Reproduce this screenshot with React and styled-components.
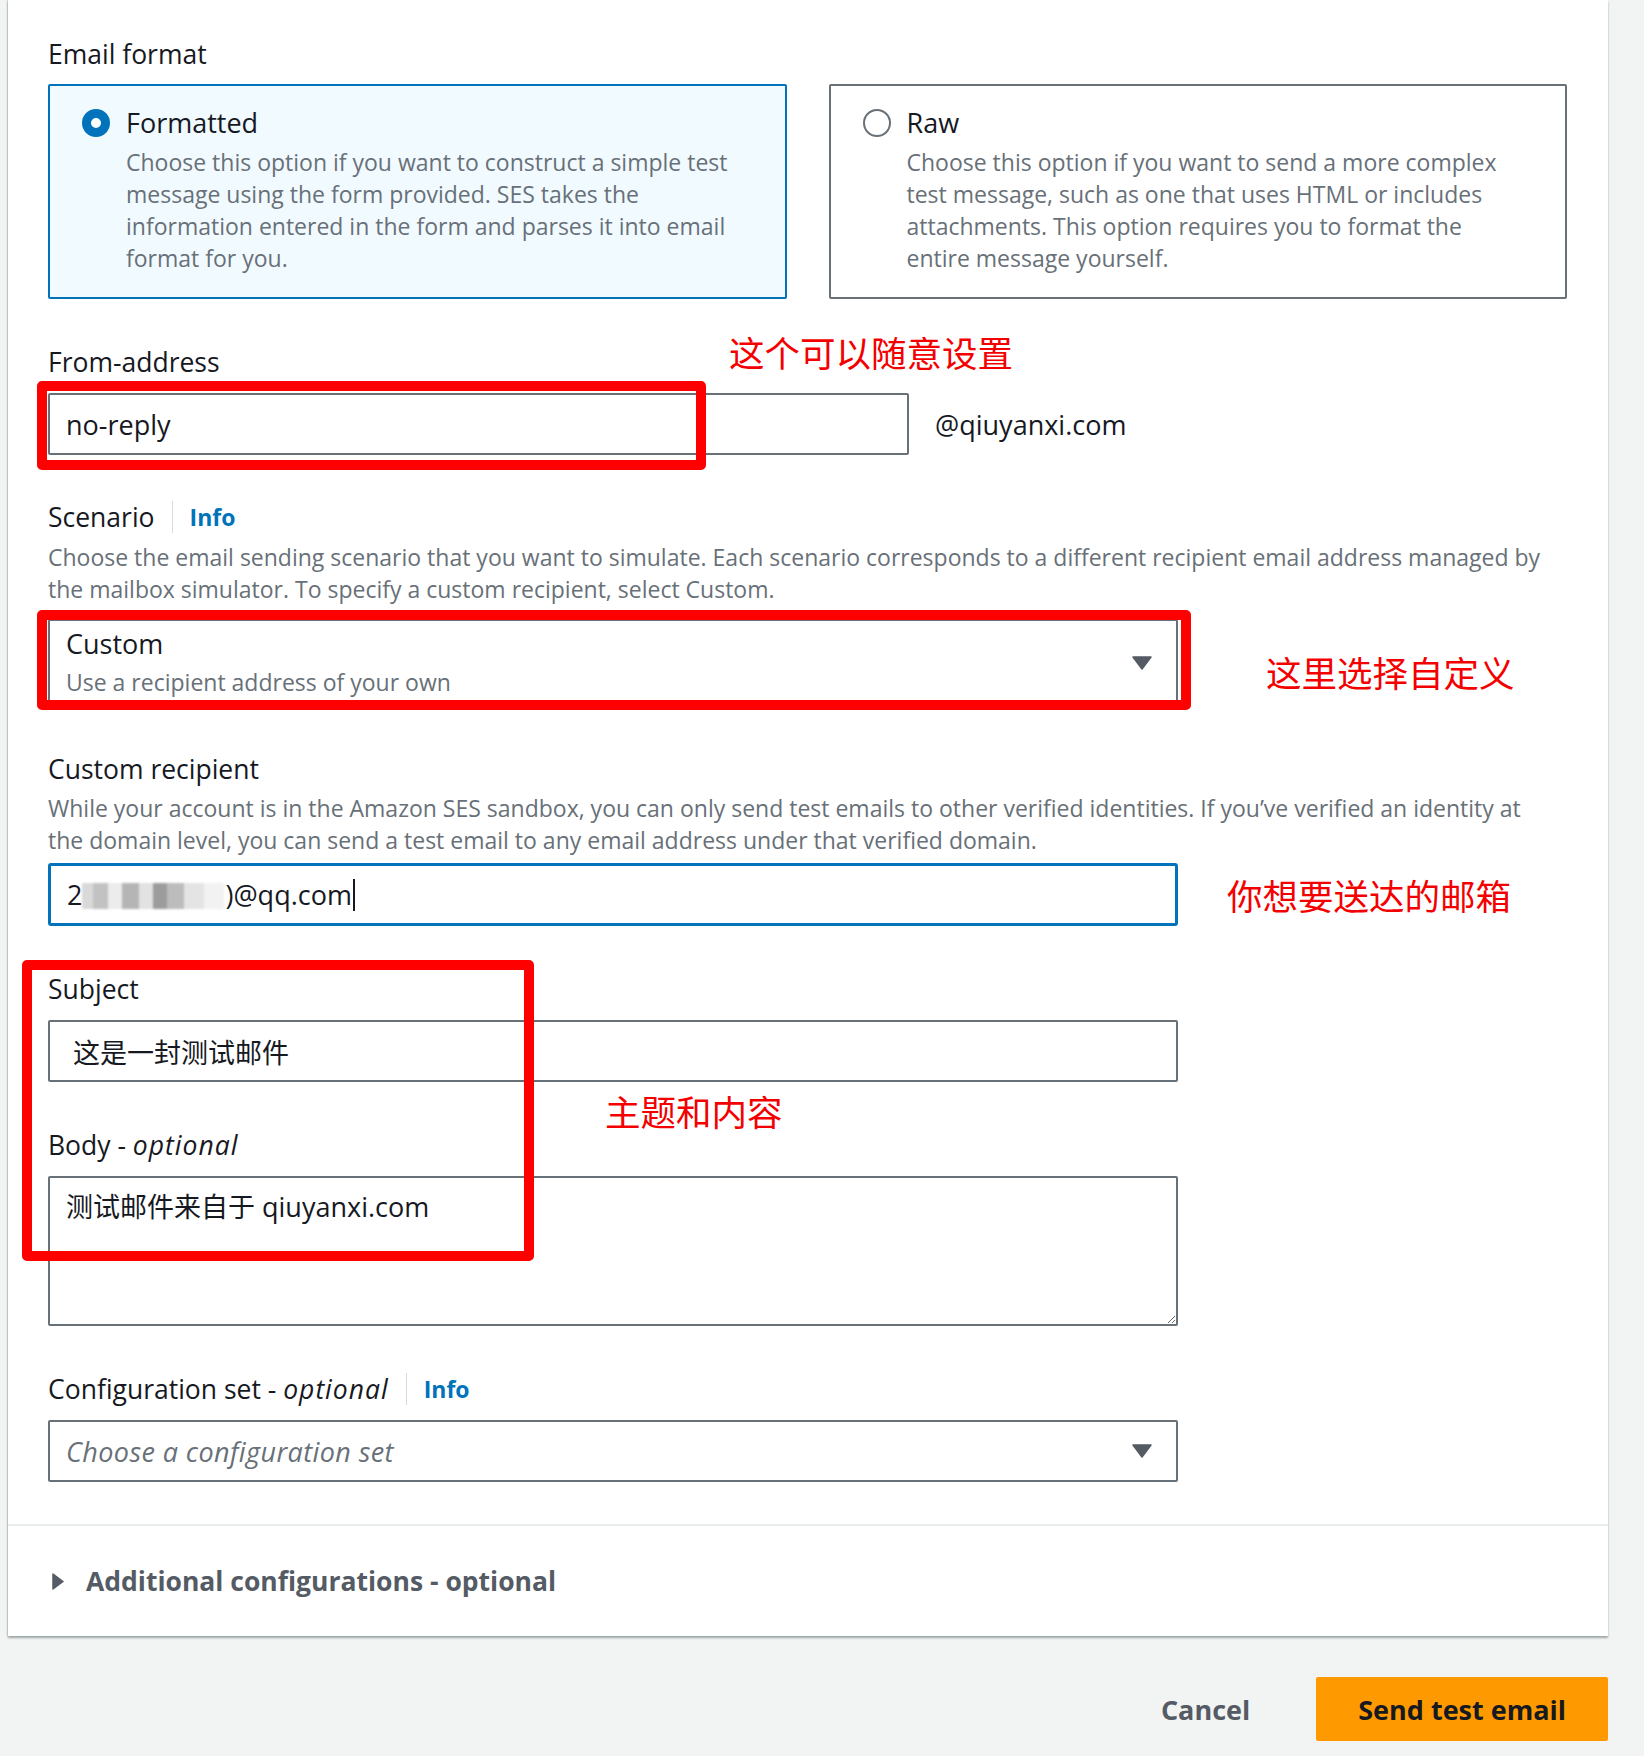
import styled, { createGlobalStyle } from 'styled-components'

const GlobalStyle = createGlobalStyle`
    body {
        margin: 0;
        background: #f2f3f3;
        font-family: "Open Sans", "Noto Sans CJK SC", sans-serif;
        color: #16191f;
    }
`

const Page = styled.div`
    width: 1600px;
    padding: 0 36px 0 8px;
`

const Panel = styled.section`
    background: #fff;
    box-shadow: 0 2px 2px rgba(0, 28, 36, 0.35), -1px 0 1px rgba(0, 28, 36, 0.12);
`

const FormBody = styled.div`
    padding: 38px 41px 42px 40px;
`

const Field = styled.div`
    position: relative;
    margin-top: ${p => p.$gap || 0}px;
`

const LabelRow = styled.div`
    display: flex;
    align-items: center;
    height: 32px;
`

const Label = styled.div`
    font-size: 26.5px;
    line-height: 32px;
    font-weight: 500;
    color: #16191f;

    & em {
        font-style: italic;
        letter-spacing: 1px;
    }
`

const Divider = styled.span`
    width: 1px;
    height: 32px;
    background: #d5dbdb;
    margin: 0 17px 0 17px;
`

const InfoLink = styled.a`
    font-size: 23px;
    font-weight: 700;
    color: #0073bb;
    text-decoration: none;
`

const Description = styled.p`
    margin: ${p => p.$mt || 8}px 0 0;
    font-size: 23px;
    line-height: 32px;
    color: #687078;
`

const Line = styled.span`
    display: block;
    white-space: nowrap;
`

const Cards = styled.div`
    display: grid;
    grid-template-columns: 1fr 1fr;
    gap: 42px;
    margin-top: 14px;
`

const OptionCard = styled.label`
    display: flex;
    gap: 16px;
    padding: 21px 30px 23px 32px;
    border: 2px solid ${p => (p.$checked ? '#0073bb' : '#687078')};
    border-radius: 2px;
    background: ${p => (p.$checked ? '#f1faff' : '#fff')};
`

const Radio = styled.span`
    flex: none;
    box-sizing: border-box;
    width: 28px;
    height: 28px;
    margin-top: 2px;
    border-radius: 50%;
    background: #fff;
    border: ${p => (p.$checked ? '9px solid #0073bb' : '2px solid #687078')};
`

const OptionTitle = styled.div`
    font-size: 27px;
    line-height: 32px;
    font-weight: 500;
`

const OptionText = styled(Description)`
    margin-top: 7px;
`

const InputRow = styled.div`
    position: relative;
    display: flex;
    align-items: center;
    margin-top: ${p => p.$mt || 15}px;
`

const TextInput = styled.input`
    box-sizing: border-box;
    width: ${p => p.$width || 1130}px;
    height: ${p => p.$height || 62}px;
    padding: 0 16px;
    border: 2px solid #687078;
    border-radius: 2px;
    font-family: inherit;
    font-size: 27px;
    color: #16191f;
    outline: none;
    background: #fff;
`

const Suffix = styled.span`
    margin-left: 26px;
    font-size: 27px;
`

const FocusBox = styled.div`
    box-sizing: border-box;
    width: 1130px;
    height: 63px;
    display: flex;
    align-items: center;
    padding: 0 16px;
    border: 3px solid #0073bb;
    border-radius: 3px;
    font-size: 27px;
`

// pixelated part of the address hidden in the screenshot
const Blur = styled.span`
    display: inline-block;
    width: 142px;
    height: 26px;
    margin: 2px 1px 0 0;
    background: linear-gradient(90deg,
        #d9d9d9 0 8%, #c2c2c2 8% 18%, #ececec 18% 28%, #b5b5b5 28% 40%,
        #e2e2e2 40% 50%, #9c9c9c 50% 60%, #bcbcbc 60% 72%, #e4e4e4 72% 86%, #f2f2f2 86% 100%);
    filter: blur(1.2px);
`

const Caret = styled.span`
    display: inline-block;
    width: 2px;
    height: 32px;
    margin-left: 1px;
    background: #16191f;
`

const SelectBox = styled.div`
    box-sizing: border-box;
    width: 1130px;
    height: ${p => p.$height || 62}px;
    display: flex;
    align-items: center;
    justify-content: space-between;
    padding: ${p => p.$padding || '0 24px 0 16px'};
    border: 2px solid #687078;
    border-radius: 2px;
`

const SelectTitle = styled.div`
    font-size: 27px;
    line-height: 30px;
`

const SelectSub = styled.div`
    margin-top: 8px;
    font-size: 23px;
    line-height: 30px;
    color: #687078;
`

const Placeholder = styled.span`
    font-size: 27px;
    font-style: italic;
    letter-spacing: 0.4px;
    color: #687078;
`

const TextArea = styled.textarea`
    display: block;
    box-sizing: border-box;
    width: 1130px;
    height: 150px;
    margin-top: 15px;
    padding: 12px 16px;
    border: 2px solid #687078;
    border-radius: 2px;
    font-family: inherit;
    font-size: 27px;
    line-height: 34px;
    color: #16191f;
    resize: vertical;
    outline: none;
`

const Footer = styled.div`
    display: flex;
    align-items: center;
    gap: 22px;
    height: 110px;
    padding: 0 44px;
    border-top: 2px solid #eaeded;
    font-size: 26.5px;
    font-weight: 700;
    color: #545b64;
`

const Actions = styled.div`
    display: flex;
    justify-content: flex-end;
    gap: 24px;
    margin-top: 41px;
    padding-bottom: 14px;
`

const Button = styled.button`
    height: 64px;
    padding: 0 42px;
    border: none;
    border-radius: 2px;
    font-family: inherit;
    font-size: 27px;
    font-weight: 700;
    color: ${p => (p.$primary ? '#16191f' : '#545b64')};
    background: ${p => (p.$primary ? '#ff9900' : 'transparent')};
`

// red annotation overlays drawn over the screenshot
const Highlight = styled.div`
    position: absolute;
    left: ${p => p.$left}px;
    top: ${p => p.$top}px;
    width: ${p => p.$w}px;
    height: ${p => p.$h}px;
    box-sizing: border-box;
    border: 10px solid #ff0000;
    border-radius: 5px;
    pointer-events: none;
`

const Note = styled.div`
    position: absolute;
    left: ${p => p.$left}px;
    top: ${p => p.$top}px;
    font-family: "Noto Sans CJK SC", sans-serif;
    font-size: 35.5px;
    line-height: 36px;
    color: #f40000;
    white-space: nowrap;
`

const Stack = styled.div`
    position: relative;
    margin-top: ${p => p.$gap || 0}px;
`

function CaretDown() {
    return (
        <svg width="20" height="14" viewBox="0 0 20 14">
            <path d="M1 1h18L10 13z" fill="#545b64" stroke="#545b64" strokeWidth="1.5" strokeLinejoin="round" />
        </svg>
    )
}

function CaretRight() {
    return (
        <svg width="12" height="17" viewBox="0 0 12 17">
            <path d="M1 1l10 7.5L1 16z" fill="#545b64" stroke="#545b64" strokeWidth="1.5" strokeLinejoin="round" />
        </svg>
    )
}

const options = [
    {
        title: 'Formatted',
        lines: [
            'Choose this option if you want to construct a simple test',
            'message using the form provided. SES takes the',
            'information entered in the form and parses it into email',
            'format for you.',
        ],
        checked: true,
    },
    {
        title: 'Raw',
        lines: [
            'Choose this option if you want to send a more complex',
            'test message, such as one that uses HTML or includes',
            'attachments. This option requires you to format the',
            'entire message yourself.',
        ],
        checked: false,
    },
]

const scenarioText = [
    'Choose the email sending scenario that you want to simulate. Each scenario corresponds to a different recipient email address managed by',
    'the mailbox simulator. To specify a custom recipient, select Custom.',
]

const recipientText = [
    'While your account is in the Amazon SES sandbox, you can only send test emails to other verified identities. If you’ve verified an identity at',
    'the domain level, you can send a test email to any email address under that verified domain.',
]

function Lines({ lines }) {
    return lines.map(l => <Line key={l}>{l}</Line>)
}

export default function App() {
    return (
        <Page>
            <GlobalStyle />
            <Panel>
                <FormBody>
                    <Field>
                        <Label>Email format</Label>
                        <Cards>
                            {options.map(o => (
                                <OptionCard key={o.title} $checked={o.checked}>
                                    <Radio $checked={o.checked} />
                                    <div>
                                        <OptionTitle>{o.title}</OptionTitle>
                                        <OptionText><Lines lines={o.lines} /></OptionText>
                                    </div>
                                </OptionCard>
                            ))}
                        </Cards>
                    </Field>

                    <Field $gap={47}>
                        <Label>From-address</Label>
                        <Note $left={681} $top={-12}>这个可以随意设置</Note>
                        <InputRow>
                            <TextInput $width={861} readOnly defaultValue="no-reply" />
                            <Suffix>@qiuyanxi.com</Suffix>
                            <Highlight $left={-11} $top={-12} $w={669} $h={89} />
                        </InputRow>
                    </Field>

                    <Field $gap={46}>
                        <LabelRow>
                            <Label>Scenario</Label>
                            <Divider />
                            <InfoLink href="#">Info</InfoLink>
                        </LabelRow>
                        <Description><Lines lines={scenarioText} /></Description>
                        <InputRow $mt={14}>
                            <SelectBox $height={84} $padding="8px 24px 4px 16px">
                                <div>
                                    <SelectTitle>Custom</SelectTitle>
                                    <SelectSub>Use a recipient address of your own</SelectSub>
                                </div>
                                <CaretDown />
                            </SelectBox>
                            <Highlight $left={-11} $top={-9} $w={1154} $h={100} />
                            <Note $left={1218} $top={35}>这里选择自定义</Note>
                        </InputRow>
                    </Field>

                    <Field $gap={50}>
                        <Label>Custom recipient</Label>
                        <Description $mt={7}><Lines lines={recipientText} /></Description>
                        <InputRow $mt={7}>
                            <FocusBox>
                                2<Blur />)@qq.com<Caret />
                            </FocusBox>
                            <Note $left={1179} $top={14}>你想要送达的邮箱</Note>
                        </InputRow>
                    </Field>

                    <Stack $gap={47}>
                        <Field>
                            <Label>Subject</Label>
                            <InputRow>
                                <TextInput readOnly defaultValue=" 这是一封测试邮件" />
                            </InputRow>
                        </Field>
                        <Field $gap={47}>
                            <Label>Body - <em>optional</em></Label>
                            <TextArea readOnly defaultValue="测试邮件来自于 qiuyanxi.com" />
                        </Field>
                        <Highlight $left={-26} $top={-13} $w={512} $h={301} />
                        <Note $left={557} $top={120}>主题和内容</Note>
                    </Stack>

                    <Field $gap={47}>
                        <LabelRow>
                            <Label>Configuration set - <em>optional</em></Label>
                            <Divider />
                            <InfoLink href="#">Info</InfoLink>
                        </LabelRow>
                        <InputRow>
                            <SelectBox>
                                <Placeholder>Choose a configuration set</Placeholder>
                                <CaretDown />
                            </SelectBox>
                        </InputRow>
                    </Field>
                </FormBody>
                <Footer>
                    <CaretRight />
                    <span>Additional configurations - optional</span>
                </Footer>
            </Panel>
            <Actions>
                <Button>Cancel</Button>
                <Button $primary>Send test email</Button>
            </Actions>
        </Page>
    )
}
